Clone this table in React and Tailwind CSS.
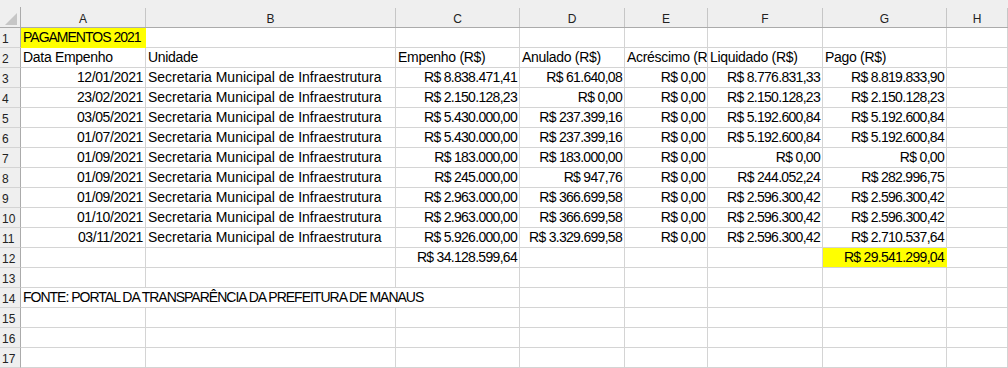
import React from "react";

const cols = ["A", "B", "C", "D", "E", "F", "G", "H"];

const unidade = "Secretaria Municipal de Infraestrutura";

const lancamentos = [
  ["12/01/2021", "R$ 8.838.471,41", "R$ 61.640,08", "R$ 0,00", "R$ 8.776.831,33", "R$ 8.819.833,90"],
  ["23/02/2021", "R$ 2.150.128,23", "R$ 0,00", "R$ 0,00", "R$ 2.150.128,23", "R$ 2.150.128,23"],
  ["03/05/2021", "R$ 5.430.000,00", "R$ 237.399,16", "R$ 0,00", "R$ 5.192.600,84", "R$ 5.192.600,84"],
  ["01/07/2021", "R$ 5.430.000,00", "R$ 237.399,16", "R$ 0,00", "R$ 5.192.600,84", "R$ 5.192.600,84"],
  ["01/09/2021", "R$ 183.000,00", "R$ 183.000,00", "R$ 0,00", "R$ 0,00", "R$ 0,00"],
  ["01/09/2021", "R$ 245.000,00", "R$ 947,76", "R$ 0,00", "R$ 244.052,24", "R$ 282.996,75"],
  ["01/09/2021", "R$ 2.963.000,00", "R$ 366.699,58", "R$ 0,00", "R$ 2.596.300,42", "R$ 2.596.300,42"],
  ["01/10/2021", "R$ 2.963.000,00", "R$ 366.699,58", "R$ 0,00", "R$ 2.596.300,42", "R$ 2.596.300,42"],
  ["03/11/2021", "R$ 5.926.000,00", "R$ 3.329.699,58", "R$ 0,00", "R$ 2.596.300,42", "R$ 2.710.537,64"],
];

function Cell({ children, right, num, date, className = "" }) {
  return (
    <div
      className={
        "h-[20px] border-r border-b border-[#d4d4d4] flex items-center whitespace-nowrap overflow-hidden text-[14px] leading-[19px] text-black " +
        (right ? "justify-end pr-[2px] " : "pl-[2px] ") +
        (num ? "tracking-[-0.7px] " : "") +
        (date ? "tracking-[-0.4px] " : "") +
        className
      }
    >
      {children}
    </div>
  );
}

function RowNum({ n }) {
  return (
    <div className="h-[20px] bg-[#efefef] border-r border-r-[#ababab] border-b border-b-[#d4d4d4] flex items-end pl-[2px] text-[12px] leading-[16px] text-[#222]">
      {n}
    </div>
  );
}

export default function App() {
  const rows = [];

  // linha 1
  rows.push(
    <React.Fragment key="r1">
      <RowNum n={1} />
      <Cell className="bg-[#ffff00] border-[#ffff00] tracking-[-1px]">PAGAMENTOS 2021</Cell>
      {cols.slice(1).map((c) => (
        <Cell key={c} />
      ))}
    </React.Fragment>
  );

  // linha 2
  const heads = ["Data Empenho", "Unidade", "Empenho (R$)", "Anulado (R$)", "Acréscimo (R$)", "Liquidado (R$)", "Pago (R$)", ""];
  rows.push(
    <React.Fragment key="r2">
      <RowNum n={2} />
      {heads.map((h, i) => (
        <Cell key={i} className="tracking-[-0.3px]">{h}</Cell>
      ))}
    </React.Fragment>
  );

  lancamentos.forEach((l, i) => {
    rows.push(
      <React.Fragment key={"l" + i}>
        <RowNum n={i + 3} />
        <Cell right date>{l[0]}</Cell>
        <Cell>{unidade}</Cell>
        <Cell right num>{l[1]}</Cell>
        <Cell right num>{l[2]}</Cell>
        <Cell right num>{l[3]}</Cell>
        <Cell right num>{l[4]}</Cell>
        <Cell right num>{l[5]}</Cell>
        <Cell />
      </React.Fragment>
    );
  });

  // linha 12 - totais
  rows.push(
    <React.Fragment key="r12">
      <RowNum n={12} />
      <Cell />
      <Cell />
      <Cell right num>R$ 34.128.599,64</Cell>
      <Cell />
      <Cell />
      <Cell />
      <Cell right num className="bg-[#ffff00] border-r-[#ffff00] text-[#ff0000]">
        R$ 29.541.299,04
      </Cell>
      <Cell />
    </React.Fragment>
  );

  rows.push(
    <React.Fragment key="r13">
      <RowNum n={13} />
      {cols.map((c) => (
        <Cell key={c} />
      ))}
    </React.Fragment>
  );

  rows.push(
    <React.Fragment key="r14">
      <RowNum n={14} />
      <Cell className="col-span-3 tracking-[-1px]">FONTE: PORTAL DA TRANSPARÊNCIA DA PREFEITURA DE MANAUS</Cell>
      {cols.slice(3).map((c) => (
        <Cell key={c} />
      ))}
    </React.Fragment>
  );

  [15, 16, 17].forEach((n) => {
    rows.push(
      <React.Fragment key={"e" + n}>
        <RowNum n={n} />
        {cols.map((c) => (
          <Cell key={c} />
        ))}
      </React.Fragment>
    );
  });

  return (
    <div className="w-[1008px] h-[368px] overflow-hidden bg-white font-['Liberation_Sans',Arial,sans-serif]">
      <div className="grid grid-cols-[21px_125px_250px_124px_105px_83px_115px_124px_1fr]">
        {/* cabeçalho das colunas */}
        <div className="h-[28px] bg-[#efefef] border-b border-[#ababab] flex items-end">
          <div className="h-[20px] w-full border-r border-[#ababab] flex items-end justify-end">
            <svg width="14" height="14" viewBox="0 0 14 14" className="mr-[2px] mb-[1px]">
              <polygon points="13,1 13,13 1,13" fill="#c6c6c6" />
            </svg>
          </div>
        </div>
        {cols.map((c) => (
          <div key={c} className="h-[28px] bg-[#efefef] border-b border-[#ababab] flex flex-col justify-end">
            <div className="h-[19px] border-r border-[#c6c6c6] flex items-end justify-center text-[12px] leading-[16px] text-[#222]">
              {c}
            </div>
          </div>
        ))}
        {rows}
      </div>
    </div>
  );
}
